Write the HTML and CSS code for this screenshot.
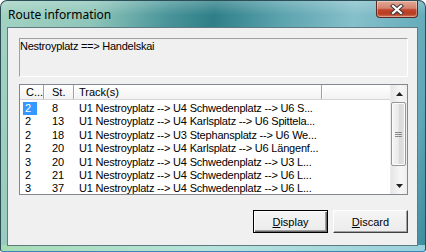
FILE: index.html
```html
<!DOCTYPE html>
<html>
  <head>
    <title>Route information</title>
    <link rel="stylesheet" href="styles.css">
  </head>
  <body>

    <div class="window">
      <div class="titlebar">
        <span class="title">Route information</span>
        <div class="close">
          <svg width="14" height="11" viewBox="0 0 14 11">
            <path d="M3 2 L11 9 M11 2 L3 9" stroke="#3b3b3b" stroke-width="4.2" stroke-linecap="square"/>
            <path d="M3 2 L11 9 M11 2 L3 9" stroke="#fff" stroke-width="2.2" stroke-linecap="square"/>
          </svg>
        </div>
      </div>

      <div class="client">
        <div class="route">Nestroyplatz ==&gt; Handelskai</div>

        <div class="list">
          <div class="grid">
            <div class="header">
              <div class="h c1">C...</div>
              <div class="h c2">St.</div>
              <div class="h c3">Track(s)</div>
              <div class="h c4"></div>
            </div>
            <div class="rows">
              <div class="row"><span class="c1"><span class="sel">2</span></span><span class="c2">8</span><span class="c3">U1 Nestroyplatz --&gt; U4 Schwedenplatz --&gt; U6 S...</span></div>
              <div class="row"><span class="c1"><span class="lbl">2</span></span><span class="c2">13</span><span class="c3">U1 Nestroyplatz --&gt; U4 Karlsplatz --&gt; U6 Spittela...</span></div>
              <div class="row"><span class="c1"><span class="lbl">2</span></span><span class="c2">18</span><span class="c3">U1 Nestroyplatz --&gt; U3 Stephansplatz --&gt; U6 We...</span></div>
              <div class="row"><span class="c1"><span class="lbl">2</span></span><span class="c2">20</span><span class="c3">U1 Nestroyplatz --&gt; U4 Karlsplatz --&gt; U6 Längenf...</span></div>
              <div class="row"><span class="c1"><span class="lbl">3</span></span><span class="c2">20</span><span class="c3">U1 Nestroyplatz --&gt; U4 Schwedenplatz --&gt; U3 L...</span></div>
              <div class="row"><span class="c1"><span class="lbl">2</span></span><span class="c2">21</span><span class="c3">U1 Nestroyplatz --&gt; U4 Schwedenplatz --&gt; U6 L...</span></div>
              <div class="row"><span class="c1"><span class="lbl">3</span></span><span class="c2">37</span><span class="c3">U1 Nestroyplatz --&gt; U4 Schwedenplatz --&gt; U6 L...</span></div>
            </div>
          </div>

          <div class="scrollbar">
            <div class="arrow">
              <svg width="7" height="4" viewBox="0 0 7 4"><polygon points="3.5,0 7,4 0,4" fill="#222"/></svg>
            </div>
            <div class="track">
              <div class="thumb">
                <div class="grip"></div>
              </div>
            </div>
            <div class="arrow">
              <svg width="7" height="4" viewBox="0 0 7 4"><polygon points="0,0 7,0 3.5,4" fill="#222"/></svg>
            </div>
          </div>
        </div>

        <div class="buttons">
          <button class="btn default"><u>D</u>isplay</button>
          <button class="btn"><u>D</u>iscard</button>
        </div>
      </div>
    </div>

  </body>
</html>
```

FILE: styles.css
```css
* {
  box-sizing: border-box;
}
body {
  margin: 0;
  background: #fff;
  font-family: "Liberation Sans", Arial, sans-serif;
  font-size: 11px;
  color: #000;
}
.window {
  width: 426px;
  height: 252px;
  display: flex;
  flex-direction: column;
  padding: 0 7px 5px 6px;
  border: 1px solid #2c4e57;
  border-bottom-color: #3a86b8;
  border-radius: 7px 7px 3px 3px;
  background:
    linear-gradient(to right, #a6dcb4, #b7e3dc 50%, #98d0dc) bottom / 100% 6px no-repeat,
    linear-gradient(to bottom, rgba(255,255,255,0.22), rgba(255,255,255,0) 14px) top / 100% 27px no-repeat,
    linear-gradient(100deg, #a3d2c2 0%, #8fc6ba 20%, #4a959a 36%, #2f7f88 46%, #5aa2ad 60%, #86c0ca 76%, #5fa8b8 94%, #3b8a9a 100%);
}
.titlebar {
  height: 26px;
  display: flex;
  justify-content: space-between;
  align-items: flex-start;
}
.title {
  margin-left: 1px;
  line-height: 27px;
  font-family: "Noto Sans", "Open Sans", sans-serif;
  font-size: 12px;
  color: #000;
}
.close {
  width: 42px;
  height: 17px;
  display: flex;
  align-items: center;
  justify-content: center;
  border: 1px solid #5a2a22;
  border-top: none;
  border-radius: 0 0 4px 4px;
  background: linear-gradient(to bottom, #e4a896 0%, #d48470 45%, #c2452c 55%, #b83c22 80%, #d2765a 100%);
  box-shadow: inset 0 0 0 1px rgba(255,255,255,0.35);
}
.client {
  flex: 1;
  display: flex;
  flex-direction: column;
  padding: 10px 9px 0 11px;
  border: 1px solid #5f7a80;
  background: #f0f0f0;
}
.route {
  height: 39px;
  line-height: 13px;
  letter-spacing: -0.25px;
  padding-top: 1px;
  border: 1px solid;
  border-color: #a0a0a0 #fff #fff #a0a0a0;
}
.list {
  display: flex;
  height: 111px;
  margin-top: 7px;
  border: 1px solid #828790;
  background: #fff;
  overflow: hidden;
}
.grid {
  flex: 1;
  display: flex;
  flex-direction: column;
  overflow: hidden;
}
.header {
  display: flex;
  flex: none;
  height: 15px;
  border-bottom: 1px solid #d5d5d5;
  background: linear-gradient(to bottom, #fff, #f2f2f2);
  line-height: 14px;
}
.h {
  border-right: 1px solid #a0a0a0;
  box-shadow: 1px 0 #fff;
}
.c1 {
  width: 24px;
  flex: none;
}
.c2 {
  width: 30px;
  flex: none;
}
.c3 {
  width: 248px;
  flex: none;
}
.c4 {
  flex: 1;
  border-right: none;
  box-shadow: none;
}
.h.c1 {
  padding-left: 6px;
}
.h.c2 {
  padding-left: 8px;
}
.h.c3 {
  padding-left: 5px;
}
.rows {
  padding-top: 2px;
}
.row {
  display: flex;
  height: 13.4px;
  line-height: 13px;
  white-space: nowrap;
}
.row .c1 {
  padding-left: 3px;
}
.row .c2 {
  padding-left: 8px;
}
.row .c3 {
  padding-left: 5px;
  letter-spacing: -0.2px;
}
.lbl,
.sel {
  display: inline-block;
  width: 14px;
  height: 13px;
  padding-left: 2px;
}
.sel {
  background: #3399ff;
  color: #fff;
}
.scrollbar {
  width: 17px;
  display: flex;
  flex-direction: column;
  background: linear-gradient(to right, #e6e6e6, #f6f6f6 60%, #eeeeee);
  border-left: 1px solid #ececec;
}
.arrow {
  height: 17px;
  display: flex;
  align-items: center;
  justify-content: center;
}
.track {
  flex: 1;
}
.thumb {
  width: 15px;
  height: 64px;
  display: flex;
  align-items: center;
  justify-content: center;
  border: 1px solid #979797;
  border-radius: 2px;
  background: linear-gradient(to right, #f6f6f6, #e9e9e9 50%, #d8d8d8 51%, #e3e3e3);
  box-shadow: inset 0 0 0 1px #fbfbfb;
}
.grip {
  width: 7px;
  height: 5px;
  border-top: 1px solid #8a8a8a;
  border-bottom: 1px solid #8a8a8a;
  background: linear-gradient(#8a8a8a, #8a8a8a) center / 100% 1px no-repeat;
}
.buttons {
  display: flex;
  justify-content: flex-end;
  gap: 5px;
  margin-top: 15px;
}
.btn {
  width: 75px;
  height: 23px;
  padding: 0;
  font-family: "Liberation Sans", Arial, sans-serif;
  font-size: 11px;
  color: #000;
  background: linear-gradient(to bottom, #f5f5f5, #ebebeb);
  border: 1px solid;
  border-color: #fff #404040 #404040 #fff;
  box-shadow: inset -1px -1px #a0a0a0;
}
.btn.default {
  border-color: #000;
  box-shadow: inset 1px 1px #fff, inset -1px -1px #696969, inset -2px -2px #a0a0a0;
}
```
